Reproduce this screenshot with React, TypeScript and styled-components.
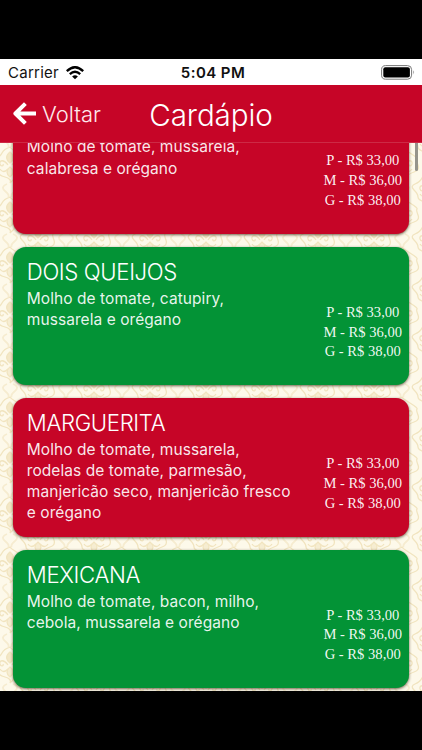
import React from "react";
import styled, { createGlobalStyle } from "styled-components";

const GlobalStyle = createGlobalStyle`
  * { box-sizing: border-box; }
  body { margin: 0; background: #000; }
`;

const RED = "#c60527";
const GREEN = "#039336";

const Screen = styled.div`
  width: 422px;
  height: 750px;
  padding: 59px 0;
  background: #000;
  overflow: hidden;
  display: flex;
  flex-direction: column;
  font-family: Inter, "Liberation Sans", sans-serif;
`;

const StatusBar = styled.div`
  height: 26px;
  flex: none;
  background: #fff;
  color: #111;
  display: grid;
  grid-template-columns: 1fr auto 1fr;
  align-items: center;
  padding: 1px 6px 0 8px;
  font-size: 15px;
`;

const Carrier = styled.div`
  display: flex;
  align-items: center;
  gap: 7px;
  letter-spacing: 0.26px;
`;

const Clock = styled.div`
  font-weight: 600;
  letter-spacing: 0.42px;
  font-size: 15px;
  padding-left: 2px;
`;

const BatteryIcon = styled.svg`
  justify-self: end;
  display: block;
`;

const Header = styled.header`
  height: 58px;
  flex: none;
  background: ${RED};
  border-bottom: 1px solid #cd2a45;
  color: #fff;
  display: grid;
  grid-template-columns: 1fr auto 1fr;
  align-items: center;
  padding: 0 13px;
`;

const Back = styled.button`
  display: flex;
  align-items: center;
  gap: 6px;
  border: 0;
  padding: 0;
  background: none;
  color: #ffe9ec;
  font: 350 22px/28px Inter, sans-serif;
`;

const Title = styled.h1`
  margin: 0;
  padding-top: 2px;
  font-size: 29.6px;
  line-height: 36px;
  font-weight: 350;
  letter-spacing: -0.1px;
`;

const Viewport = styled.main`
  position: relative;
  flex: 1;
  min-height: 0;
  overflow: hidden;
  background: #fdf9ea;
`;

const Wallpaper = styled.svg`
  position: absolute;
  inset: 0;
`;

const Scrollbar = styled.div`
  position: absolute;
  top: 0;
  right: 4px;
  width: 3px;
  height: 28px;
  border-radius: 0 0 2px 2px;
  background: #96948b;
`;

const List = styled.div`
  position: relative;
  display: flex;
  flex-direction: column;
  gap: 13px;
  margin-top: -47.6px;
  padding: 0 13.3px;
`;

const Card = styled.article<{ $color: string }>`
  flex: none;
  height: 138.4px;
  border-radius: 13px;
  background: ${(p) => p.$color};
  color: #fff;
  box-shadow: 0 1px 3px rgba(60, 45, 20, 0.75);
  display: flex;
  justify-content: space-between;
  padding: 11px 6.6px 0 13.5px;
`;

const Info = styled.div`
  width: 275px;
`;

const Name = styled.h2`
  min-height: 28px;
  margin: 0 0 2px;
  font-size: 22.2px;
  line-height: 28px;
  font-weight: 350;
  letter-spacing: -0.36px;
  white-space: nowrap;
`;

const Description = styled.p`
  margin: 0;
  font-size: 15.5px;
  line-height: 21.1px;
  letter-spacing: 0.06px;
  color: rgba(255, 255, 255, 0.92);
  white-space: pre;
`;

const Prices = styled.div`
  flex: none;
  padding-top: 45px;
  text-align: center;
  font: 14.6px/19.8px "Liberation Serif", serif;
  color: rgba(255, 255, 255, 0.95);
`;

const Price = styled.div`
  white-space: nowrap;
`;

const pizzas = [
  { name: "", lines: ["Molho de tomate, mussarela,", "calabresa e orégano"] },
  { name: "DOIS QUEIJOS", lines: ["Molho de tomate, catupiry,", "mussarela e orégano"] },
  {
    name: "MARGUERITA",
    lines: ["Molho de tomate, mussarela,", "rodelas de tomate, parmesão,", "manjericão seco, manjericão fresco", "e orégano"],
  },
  { name: "MEXICANA", lines: ["Molho de tomate, bacon, milho,", "cebola, mussarela e orégano"] },
];

const prices = ["P - R$ 33,00", "M - R$ 36,00", "G - R$ 38,00"];

const Damask = () => (
  <Wallpaper width="422" height="548">
    <defs>
      <g id="motif" fill="none" stroke="#f1e4bf" strokeWidth="1.3">
        <path d="M0-13C-5-9-4-5 0-2C4-5 5-9 0-13Z" fill="#f3e7c6" />
        <path d="M0 12C-4 9-4 5 0 2C4 5 4 9 0 12Z" fill="#f6edd2" />
        <path d="M0-18Q-6-16-8-12T-15-6T-16 0T-12 7T-5 12T0 18Q4 15 5 12T12 7T16 0T15-6T8-12T0-18Z" />
        <path d="M-2 0C-6-6-11-5-10-1C-9 2-6 1-7-1M2 0C6-6 11-5 10-1C9 2 6 1 7-1M-2 4Q-7 9-10 4M2 4Q7 9 10 4" />
      </g>
      <pattern id="damask" width="56" height="50" patternUnits="userSpaceOnUse" x="10" y="22">
        <use href="#motif" x="28" y="25" />
        <use href="#motif" x="0" y="0" />
        <use href="#motif" x="56" y="0" />
        <use href="#motif" x="0" y="50" />
        <use href="#motif" x="56" y="50" />
        <g fill="none" stroke="#f6ecd0" strokeWidth="1.8">
          <path d="M3 19Q10 22 5 26T2 32M53 19Q46 22 51 26T54 32M22 3Q28 8 34 3M22 47Q28 42 34 47" />
        </g>
      </pattern>
    </defs>
    <rect width="422" height="548" fill="url(#damask)" />
  </Wallpaper>
);

const App = () => (
  <>
    <GlobalStyle />
    <Screen>
      <StatusBar>
        <Carrier>
          Carrier
          <svg width="18" height="14" viewBox="0 0 18 14" fill="none" stroke="#000" strokeWidth="2.3">
            <path d="M.8 5.1Q9-2.7 17.2 5.1" />
            <path d="M3.8 8.2Q9 3.4 14.2 8.2" />
            <path d="M9 13.2L6.1 10.4Q9 8 11.9 10.4Z" fill="#000" stroke="none" />
          </svg>
        </Carrier>
        <Clock>5:04 PM</Clock>
        <BatteryIcon width="35" height="15" viewBox="0 0 35 15">
          <rect x=".6" y=".6" width="30" height="13.6" rx="4" fill="none" stroke="#777" />
          <rect x="2.3" y="2.3" width="26.6" height="10.2" rx="2" fill="#000" />
          <path d="M32.4 5.2Q34.2 7.4 32.4 9.6Z" fill="#777" />
        </BatteryIcon>
      </StatusBar>
      <Header>
        <Back>
          <svg width="23" height="23" viewBox="0 0 23 23" fill="none" stroke="#fff" strokeWidth="4" strokeLinejoin="round">
            <path d="M12.4 1.6L2.4 11.5L12.4 21.4M3 11.5H23" />
          </svg>
          Voltar
        </Back>
        <Title>Cardápio</Title>
      </Header>
      <Viewport>
        <Damask />
        <List>
          {pizzas.map((pizza, i) => (
            <Card key={i} $color={i % 2 ? GREEN : RED}>
              <Info>
                <Name>{pizza.name}</Name>
                <Description>{pizza.lines.join("\n")}</Description>
              </Info>
              <Prices>
                {prices.map((price) => (
                  <Price key={price}>{price}</Price>
                ))}
              </Prices>
            </Card>
          ))}
        </List>
        <Scrollbar />
      </Viewport>
    </Screen>
  </>
);

export default App;
